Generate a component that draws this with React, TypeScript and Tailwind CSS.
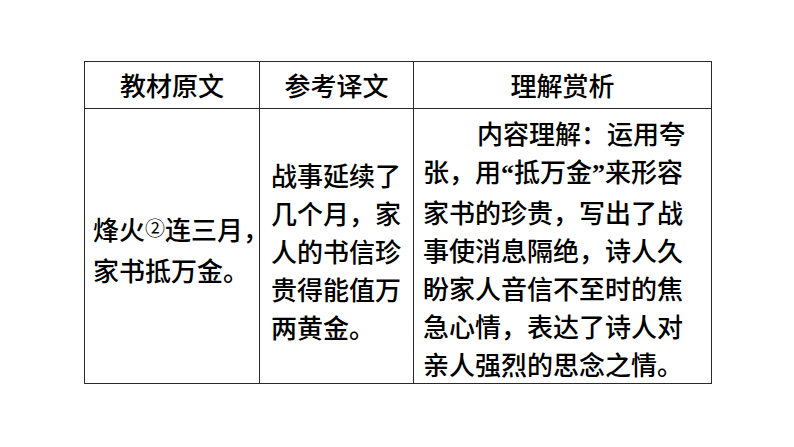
import React from "react";

const Q = ({ children }: { children: React.ReactNode }) => (
  <span className="font-['Liberation_Serif'] font-bold">{children}</span>
);

export default function App() {
  return (
    <div className="w-[794px] h-[447px] bg-white overflow-hidden pt-[61px] pl-[84px] font-['Noto_Sans_CJK_SC',sans-serif] text-black">
      <table className="w-[627px] border-collapse table-fixed text-[26px] leading-[38px] font-medium">
        <colgroup>
          <col className="w-[175px]" />
          <col className="w-[154px]" />
          <col className="w-[298px]" />
        </colgroup>
        <tbody>
          <tr className="h-[47px]">
            <td className="border-[1.5px] border-[#2a2a2a] text-center align-middle p-0">教材原文</td>
            <td className="border-[1.5px] border-[#2a2a2a] text-center align-middle p-0">参考译文</td>
            <td className="border-[1.5px] border-[#2a2a2a] text-center align-middle p-0">理解赏析</td>
          </tr>
          <tr className="h-[275px]">
            <td className="border-[1.5px] border-[#2a2a2a] align-middle pl-[8px] pr-0 pt-[6px] whitespace-nowrap overflow-visible">
              <div>
                烽火<span className="text-[20px] relative top-[-4px] font-normal">②</span>连三月，
              </div>
              <div>家书抵万金。</div>
            </td>
            <td className="border-[1.5px] border-[#2a2a2a] align-middle pl-[11px] pr-0 pt-[10px] whitespace-nowrap">
              <div>战事延续了</div>
              <div>几个月，家</div>
              <div>人的书信珍</div>
              <div>贵得能值万</div>
              <div>两黄金。</div>
            </td>
            <td className="border-[1.5px] border-[#2a2a2a] align-middle pl-[9px] pr-0 pt-[4px] whitespace-nowrap">
              <div className="pl-[54px]">内容理解：运用夸</div>
              <div>
                张，用<Q>“</Q>抵万金<Q>”</Q>来形容
              </div>
              <div>家书的珍贵，写出了战</div>
              <div>事使消息隔绝，诗人久</div>
              <div>盼家人音信不至时的焦</div>
              <div>急心情，表达了诗人对</div>
              <div>亲人强烈的思念之情。</div>
            </td>
          </tr>
        </tbody>
      </table>
    </div>
  );
}
